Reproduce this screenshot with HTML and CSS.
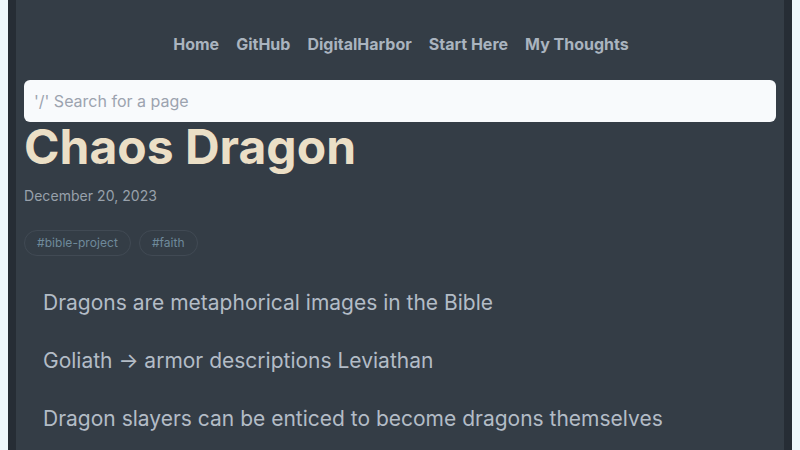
FILE: index.html
```html
<!DOCTYPE html>
<html lang="en">
<head>
    <meta charset="UTF-8">
    <meta name="viewport" content="width=device-width, initial-scale=1.0">
    <title>Chaos Dragon</title>
    <link rel="stylesheet" href="styles.css">
</head>
<body>

    <div class="page">
        <nav class="nav">
            <a href="#">Home</a>
            <a href="#">GitHub</a>
            <a href="#">DigitalHarbor</a>
            <a href="#">Start Here</a>
            <a href="#">My Thoughts</a>
        </nav>

        <input class="search" type="text" placeholder="'/' Search for a page">

        <h1 class="title">Chaos Dragon</h1>
        <div class="date">December 20, 2023</div>

        <div class="tags">
            <a class="tag" href="#">#bible-project</a>
            <a class="tag" href="#">#faith</a>
        </div>

        <div class="content">
            <p>Dragons are metaphorical images in the Bible</p>
            <p>Goliath → armor descriptions Leviathan</p>
            <p>Dragon slayers can be enticed to become dragons themselves</p>
        </div>
    </div>

</body>
</html>
```

FILE: styles.css
```css
body {
    margin: 0;
    background-color: #eef8fc;
    font-family: Inter, "Noto Sans", sans-serif;
}

.page {
    margin: 0 8px;
    min-height: 100vh;
    padding: 32px 8px 0;
    box-sizing: border-box;
    background-color: #343d46;
    border-left: 8px solid #262d35;
    border-right: 8px solid #262d35;
}

.nav {
    display: flex;
    justify-content: center;
    gap: 17px;
    line-height: 24px;
    padding-left: 2px;
}

.nav a {
    color: #aab4bf;
    font-size: 16px;
    font-weight: 700;
    text-decoration: none;
}

.search {
    display: block;
    width: 100%;
    box-sizing: border-box;
    height: 42px;
    margin-top: 24px;
    padding: 0 10px;
    border: none;
    border-radius: 6px;
    background-color: #f8fafc;
    font-family: inherit;
    font-size: 16px;
    outline: none;
}

.search::placeholder {
    color: #9ca3af;
}

.title {
    margin: 0;
    color: #ebdfc6;
    font-size: 48px;
    font-weight: 700;
    line-height: 1.05;
}

.date {
    margin-top: 13px;
    color: #98a1ab;
    font-size: 14px;
    line-height: 21px;
    letter-spacing: 0.05px;
}

.tags {
    display: flex;
    gap: 8px;
    margin-top: 24px;
}

.tag {
    padding: 0 12px;
    height: 24px;
    line-height: 24px;
    border: 1px solid #414a54;
    border-radius: 13px;
    color: #6f8a9b;
    font-size: 12px;
    letter-spacing: 0.05px;
    text-decoration: none;
}

.content {
    padding-top: 4px;
    padding-left: 19px;
}

.content p {
    margin: 28px 0;
    color: #b3bcc6;
    font-size: 21px;
    line-height: 30px;
}
```
